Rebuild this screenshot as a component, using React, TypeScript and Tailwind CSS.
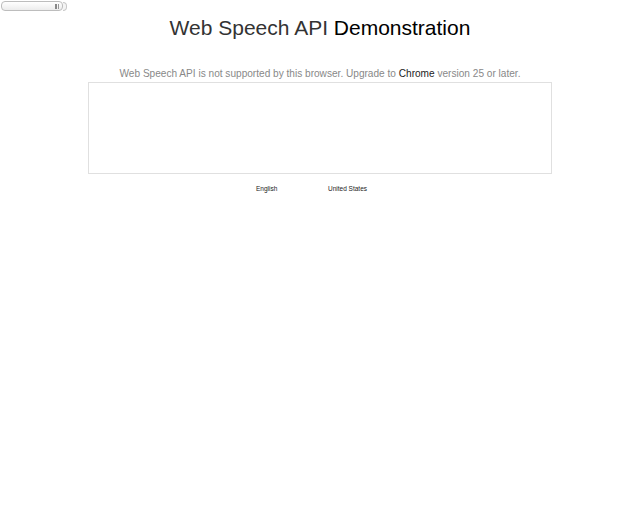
import React from "react";

export default function App() {
  return (
    <div className="w-[640px] h-[512px] bg-white relative" style={{ fontFamily: '"Liberation Sans", Arial, sans-serif' }}>
      <div className="absolute left-[1px] top-[1px] flex items-center">
        <div className="w-[62px] h-[10px] rounded-[4px] border border-[#bdbdbd] bg-gradient-to-b from-white to-[#ececec] flex items-center justify-end pr-[3px] gap-[1px]">
          <div className="w-[2px] h-[5px] bg-[#888]" />
          <div className="w-[1px] h-[5px] bg-[#999]" />
        </div>
        <div className="w-[4px] h-[9px] rounded-r-[4px] border border-l-0 border-[#c8c8c8] bg-[#f4f4f4]" />
      </div>
      <div className="flex flex-col items-center pt-[14px]">
        <h1 className="text-[21px] leading-[28px] text-[#333]">
          Web Speech API <span className="text-black">Demonstration</span>
        </h1>
        <p className="mt-[25px] text-[10.1px] leading-[14px] text-[#888]">
          Web Speech API is not supported by this browser. Upgrade to <span className="text-[#222]">Chrome</span> version 25 or later.
        </p>
        <div className="mt-[1px] w-[464px] h-[92px] border border-[#e0e0e0]" />
        <div className="mt-[11px] w-full flex pl-[256px] text-[6.5px] leading-[8px] text-[#222]">
          <span className="w-[72px]">English</span>
          <span>United States</span>
        </div>
      </div>
    </div>
  );
}
